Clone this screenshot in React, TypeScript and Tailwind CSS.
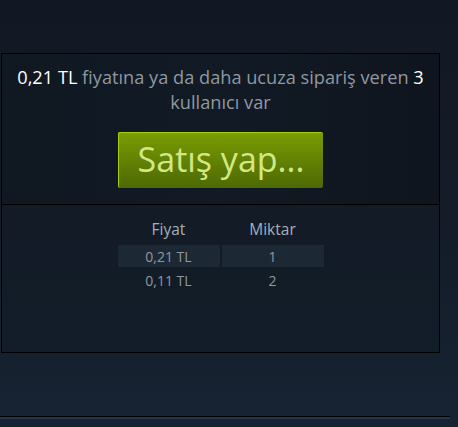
import React from "react";

interface OrderRow {
    price: string;
    qty: string;
}

const rows: OrderRow[] = [
    { price: "0,21 TL", qty: "1" },
    { price: "0,11 TL", qty: "2" },
];

const App: React.FC = () => {
    return (
        <div className="w-[458px] h-[427px] overflow-hidden bg-gradient-to-b from-[#111823] via-[#131c28] to-[#172333] font-['Open_Sans','Liberation_Sans',Arial,sans-serif]">
            <div className="h-[53px]" />

            {/* Buy order panel */}
            <div className="ml-[1px] w-[439px] h-[300px] border border-black bg-gradient-to-r from-[#101822] via-[#111a25] to-[#0f151e] flex flex-col">
                <div className="h-[150px] flex flex-col items-center pt-[11px]">
                    <p className="text-[18.2px] leading-[25px] text-[#8f98a0] text-center px-1">
                        <span className="text-white">0,21 TL</span> fiyatına ya da daha ucuza sipariş veren <span className="text-white">3</span> kullanıcı var
                    </p>
                    <button className="mt-[17px] w-[205px] h-[56px] rounded-[2px] border-t border-l border-[#a4d007] bg-gradient-to-b from-[#7a9c02] to-[#4d6904] text-[#d2e885] text-[34px] leading-none pb-[3px]">
                        Satış yap...
                    </button>
                </div>

                <div className="h-[1px] bg-black" />

                {/* Order table */}
                <div className="flex justify-center pt-[13px] bg-gradient-to-b from-[#121b26] to-[#121d29] flex-1">
                    <div className="w-[206px] text-[14px] text-[#8f98a0]">
                        <div className="flex gap-[2px] h-[24px] items-center text-[15.5px] text-[#a4b0bb]">
                            <div className="flex-1 text-center">Fiyat</div>
                            <div className="flex-1 text-center">Miktar</div>
                        </div>
                        {rows.map((row, i) => (
                            <div key={i} className={`flex gap-[2px] h-[22px] items-center ${i === 0 ? "mt-[3px]" : "mt-[2px]"}`}>
                                <div className={`flex-1 h-full flex items-center justify-center ${i === 0 ? "bg-[#1d2835]" : ""}`}>{row.price}</div>
                                <div className={`flex-1 h-full flex items-center justify-center ${i === 0 ? "bg-[#1d2835]" : ""}`}>{row.qty}</div>
                            </div>
                        ))}
                    </div>
                </div>
            </div>

            <div className="h-[63px]" />
            <div className="w-[450px] h-[1px] bg-black" />
            <div className="w-[450px] h-[2px] bg-[#25364a]" />
        </div>
    );
};

export default App;
